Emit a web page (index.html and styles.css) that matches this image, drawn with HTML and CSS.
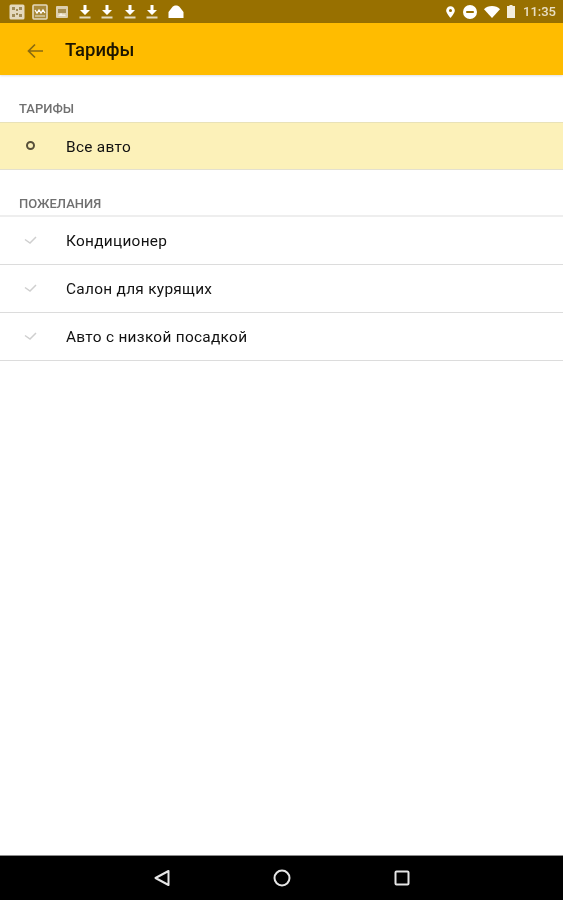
FILE: index.html
```html
<!DOCTYPE html>
<html lang="ru">
<head>
    <meta charset="UTF-8">
    <meta name="viewport" content="width=device-width, initial-scale=1.0">
    <title>Тарифы</title>
    <link rel="stylesheet" href="styles.css">
</head>
<body>
    <!-- Status Bar -->
    <div class="status-bar">
        <div class="status-group">
            <svg class="note-icon" viewBox="0 0 16 16"><rect x="0.5" y="0.5" width="15" height="15" rx="1.5" fill="#e4d9bd"/><path d="M3 3h3v3H3zM7 5h2v2H7zM10 3h3v3h-3zM3 10h3v3H3zM7 9h2v2H7zM10 10h3v3h-3z" fill="#a08c58"/></svg>
            <svg class="note-icon" viewBox="0 0 16 16"><rect x="1" y="1" width="14" height="14" rx="1" fill="#a98a3a" stroke="#e4d9bd" stroke-width="1.6"/><path d="M3 6l2 3 2-3 2 3 2-3 2 3" fill="none" stroke="#fff" stroke-width="1.3"/><rect x="3" y="11" width="10" height="2" fill="#c9b98a"/></svg>
            <svg class="small-icon" viewBox="0 0 12 12"><rect width="12" height="12" rx="1" fill="#dccfae"/><path d="M2 3h8v4H2z" fill="#a88f50"/><path d="M2 10l3-3 2 2 1-1 2 2z" fill="#f5efe0"/></svg>
            <svg class="dl-icon" viewBox="0 0 12 14"><path d="M4.5 0h3v5H11L6 10 1 5h3.500z" fill="#fff"/><rect x="0.500" y="11.500" width="11" height="2" fill="#e4d9bd"/></svg>
            <svg class="dl-icon" viewBox="0 0 12 14"><path d="M4.5 0h3v5H11L6 10 1 5h3.500z" fill="#fff"/><rect x="0.500" y="11.500" width="11" height="2" fill="#e4d9bd"/></svg>
            <svg class="dl-icon" viewBox="0 0 12 14"><path d="M4.5 0h3v5H11L6 10 1 5h3.500z" fill="#fff"/><rect x="0.500" y="11.500" width="11" height="2" fill="#e4d9bd"/></svg>
            <svg class="dl-icon" viewBox="0 0 12 14"><path d="M4.5 0h3v5H11L6 10 1 5h3.500z" fill="#fff"/><rect x="0.500" y="11.500" width="11" height="2" fill="#e4d9bd"/></svg>
            <svg class="cloud-icon" viewBox="0 0 16 13"><path d="M0.500 13V7L4 2.500C5 1 6.500 0.500 8 0.500s3 .5 4 2L15.500 7v6z" fill="#fff"/></svg>
        </div>
        <div class="status-group status-right">
            <svg class="pin-icon" viewBox="0 0 10 13"><path fill-rule="evenodd" d="M5 0a4.800 4.800 0 0 1 4.800 4.800C9.800 8 5 13 5 13S.2 8 .2 4.800A4.800 4.800 0 0 1 5 0zm0 3.200a1.700 1.700 0 1 0 0 3.400 1.700 1.700 0 0 0 0-3.400z" fill="#fff"/></svg>
            <svg class="dnd-icon" viewBox="0 0 13 13"><path fill-rule="evenodd" d="M6.500 0a6.500 6.500 0 1 1 0 13 6.500 6.500 0 0 1 0-13zM3 5.500v2h7v-2z" fill="#fff"/></svg>
            <svg class="wifi-icon" viewBox="0 0 16 12"><path d="M0 3.200C2 1.200 4.800 0 8 0s6 1.200 8 3.200L8 12z" fill="#fff"/></svg>
            <svg class="battery-icon" viewBox="0 0 8 13"><path d="M2.500 0h3v1H8v12H0V1h2.500z" fill="#f3eddc"/></svg>
            <span class="clock">11:35</span>
        </div>
    </div>

    <!-- Toolbar -->
    <div class="toolbar">
        <svg class="back-icon" viewBox="0 0 16 16"><path d="M16 8H2M8 1.500L1.500 8 8 14.500" fill="none" stroke="#8a6a10" stroke-width="1.700"/></svg>
        <span class="toolbar-title">Тарифы</span>
    </div>

    <!-- Content -->
    <div class="content">
        <div class="section-title first">ТАРИФЫ</div>
        <div class="row row-selected">
            <span class="row-icon"><span class="radio"></span></span>
            <span class="row-text">Все авто</span>
        </div>

        <div class="section-title">ПОЖЕЛАНИЯ</div>
        <div class="row row-top">
            <span class="row-icon"><svg class="check" viewBox="0 0 13 8"><path d="M1 3.500l5 3.500 6-6" fill="none" stroke="#cfcfcf" stroke-width="1.500"/></svg></span>
            <span class="row-text">Кондиционер</span>
        </div>
        <div class="row">
            <span class="row-icon"><svg class="check" viewBox="0 0 13 8"><path d="M1 3.500l5 3.500 6-6" fill="none" stroke="#cfcfcf" stroke-width="1.500"/></svg></span>
            <span class="row-text">Салон для курящих</span>
        </div>
        <div class="row">
            <span class="row-icon"><svg class="check" viewBox="0 0 13 8"><path d="M1 3.500l5 3.500 6-6" fill="none" stroke="#cfcfcf" stroke-width="1.500"/></svg></span>
            <span class="row-text">Авто с низкой посадкой</span>
        </div>
    </div>

    <!-- Navigation Bar -->
    <div class="nav-bar">
        <svg class="nav-icon" viewBox="0 0 18 18"><path d="M15.500 2L2.500 9l13 7z" fill="none" stroke="#e6e6e6" stroke-width="2" stroke-linejoin="round"/></svg>
        <svg class="nav-icon" viewBox="0 0 18 18"><circle cx="9" cy="9" r="7.500" fill="none" stroke="#e6e6e6" stroke-width="2"/></svg>
        <svg class="nav-icon" viewBox="0 0 18 18"><rect x="2.500" y="2.500" width="13" height="13" rx="1" fill="none" stroke="#e6e6e6" stroke-width="2"/></svg>
    </div>
</body>
</html>
```

FILE: styles.css
```css
/* Global Styling */
body {
    font-family: Roboto, "Liberation Sans", sans-serif;
    margin: 0;
    background-color: white;
    display: flex;
    flex-direction: column;
    height: 100vh;
    overflow: hidden;
    filter: blur(0.45px);
}

/* Status Bar */
.status-bar {
    background-color: #987000;
    height: 23px;
    flex: none;
    display: flex;
    justify-content: space-between;
    align-items: center;
    padding: 0 7px 0 9px;
}
.status-group {
    display: flex;
    align-items: center;
    gap: 7px;
}
.status-right {
    gap: 0;
}
.note-icon {
    width: 16px;
    height: 16px;
}
.small-icon {
    width: 12px;
    height: 12px;
    margin-left: 1px;
}
.dl-icon {
    width: 12px;
    height: 14px;
    margin-left: 3.500px;
}
.cloud-icon {
    width: 16px;
    height: 13px;
    margin-left: 3px;
}
.pin-icon {
    width: 9px;
    height: 12px;
}
.dnd-icon {
    width: 14px;
    height: 14px;
    margin-left: 8px;
}
.wifi-icon {
    width: 16px;
    height: 12px;
    margin-left: 7px;
}
.battery-icon {
    width: 8px;
    height: 13px;
    margin-left: 7px;
}
.clock {
    color: #e9dfc4;
    font-size: 13px;
    font-weight: 500;
    margin-left: 8px;
}

/* Toolbar */
.toolbar {
    background-color: #ffbc00;
    height: 52px;
    flex: none;
    display: flex;
    align-items: center;
    box-shadow: 0 1px 2px rgba(0, 0, 0, 0.12);
}
.back-icon {
    width: 16px;
    height: 16px;
    margin: 4px 0 0 27px;
}
.toolbar-title {
    font-size: 18.500px;
    font-weight: 500;
    color: #1c1500;
    margin: 2px 0 0 22px;
}

/* Content */
.content {
    flex: 1;
}
.section-title {
    font-size: 13px;
    font-weight: 500;
    color: #707070;
    height: 14px;
    line-height: 14px;
    margin: 27px 0 4px 19px;
}
.section-title.first {
    margin-bottom: 6px;
}
.row {
    height: 47px;
    display: flex;
    align-items: center;
    border-bottom: 1px solid #dcdcdc;
}
.row-top {
    border-top: 2px solid #eeeeee;
}
.row-selected {
    background-color: #fcf1b9;
    border-top: 1px solid #e9e2b8;
    border-bottom: 1px solid #e3e0cf;
    height: 46px;
}
.row-icon {
    width: 66px;
    flex: none;
    display: flex;
    padding-left: 24px;
    box-sizing: border-box;
}
.radio {
    width: 5px;
    height: 5px;
    border: 2px solid #57503a;
    border-radius: 50%;
    margin: -1px 0 0 2px;
}
.check {
    width: 13px;
    height: 8px;
    margin-top: -2px;
}
.row-text {
    font-size: 15.400px;
    color: #111111;
    letter-spacing: 0.3px;
    margin-top: 1px;
}

/* Navigation Bar */
.nav-bar {
    background-color: black;
    height: 44px;
    flex: none;
    border-top: 1px solid #8c8c8c;
    display: flex;
    justify-content: center;
    align-items: center;
    gap: 102px;
}
.nav-icon {
    width: 18px;
    height: 18px;
}
```
